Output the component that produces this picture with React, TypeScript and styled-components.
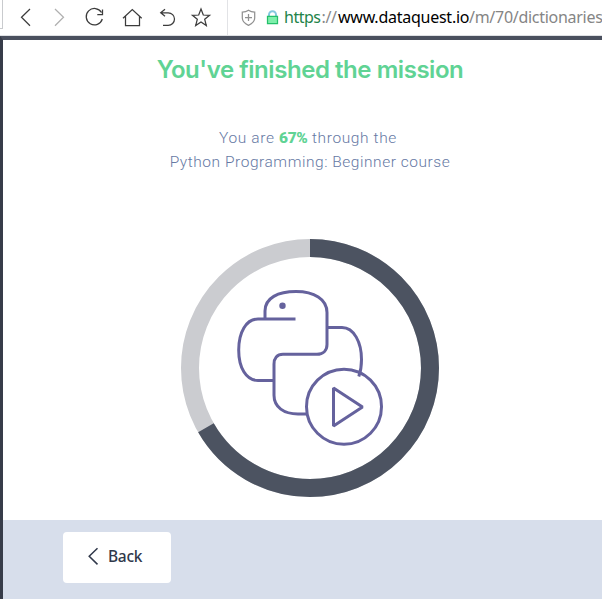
import React from 'react';
import styled, { createGlobalStyle } from 'styled-components';

const GlobalStyle = createGlobalStyle`
  * { box-sizing: border-box; }
  body { margin: 0; background: #fff; overflow: hidden; }
`;

const Window = styled.div`
  display: flex;
  flex-direction: column;
  width: 602px;
  height: 599px;
  overflow: hidden;
  background: #fff;
`;

const Toolbar = styled.header`
  display: flex;
  flex: none;
  height: 36px;
  border-bottom: 1px solid #dfe1e4;
`;

const TabEdge = styled.div`
  width: 3px;
  height: 29px;
  border-right: 1px solid #c9cbce;
  border-bottom: 1px solid #c9cbce;
`;

const NavIcons = styled.nav`
  display: flex;
  width: 225px;
  border-right: 1px solid #e2e3e6;
`;

const ToolIcon = styled.svg<{ $tone?: string }>`
  display: block;
  flex: none;
  fill: none;
  stroke: ${(p) => p.$tone ?? '#3c3c3c'};
  stroke-width: 1.25;
`;

const AddressBar = styled.div`
  display: flex;
  flex: 1;
  min-width: 0;
`;

const Url = styled.div`
  display: flex;
  font: 16px/35px 'Noto Sans', sans-serif;
  white-space: nowrap;
`;

const UrlPart = styled.span<{ $color: string; $width: number; $spacing: number }>`
  flex: none;
  width: ${(p) => p.$width}px;
  color: ${(p) => p.$color};
  letter-spacing: ${(p) => p.$spacing}px;
`;

const Page = styled.div`
  display: flex;
  flex-direction: column;
  flex: 1;
  border-top: 4px solid #4a505e;
  border-left: 3px solid #373c49;
`;

const Mission = styled.main`
  display: flex;
  flex: 1;
  flex-direction: column;
  align-items: center;
  padding-left: 15px;
`;

const Title = styled.h1`
  margin: 14px 0 0;
  color: #60d394;
  font: 600 24px/32px Inter, sans-serif;
  letter-spacing: -0.45px;
  white-space: nowrap;
`;

const Summary = styled.p`
  margin: 40px 0 0;
  color: #6679a4;
  font: 300 15.5px/24px Roboto, sans-serif;
  text-align: center;
  white-space: nowrap;
`;

const SummaryLine = styled.span<{ $shift?: number; $spacing: number }>`
  display: block;
  padding-right: ${(p) => p.$shift ?? 0}px;
  letter-spacing: ${(p) => p.$spacing}px;
`;

const Percent = styled.strong`
  color: #60d394;
  font-weight: 900;
  letter-spacing: -0.3px;
`;

const Progress = styled.svg`
  display: block;
  flex: none;
  width: 260px;
  height: 260px;
  margin-top: 64px;
  fill: none;
`;

const Footer = styled.footer`
  flex: none;
  height: 79px;
  padding: 12px 60px;
  background: #d7deeb;
`;

const BackButton = styled.button`
  display: flex;
  align-items: center;
  width: 108px;
  height: 51px;
  padding: 0 0 3px 24px;
  border: 0;
  border-radius: 4px;
  background: #fff;
  color: #30384a;
  font: 500 15.5px/20px 'Noto Sans', sans-serif;
  letter-spacing: -0.3px;
`;

const BackIcon = styled.svg`
  width: 21px;
  height: 20px;
  fill: none;
  stroke: #30384a;
  stroke-width: 1.5;
`;

export default function App() {
  return (
    <Window>
      <GlobalStyle />
      <Toolbar>
        <TabEdge />
        <NavIcons>
          <ToolIcon width="38" height="35" viewBox="3 0 38 35"><path d="M30 9 21.5 17.3 30 25.7" /></ToolIcon>
          <ToolIcon width="37" height="35" viewBox="41 0 37 35" $tone="#b0b0b0"><path d="M55 9 63.5 17.3 55 25.7" /></ToolIcon>
          <ToolIcon width="36" height="35" viewBox="78 0 36 35"><path d="M101.5 12.5A8.2 8.2 0 1 0 102.3 19M102.5 9.5v5.1h-5.2" /></ToolIcon>
          <ToolIcon width="36" height="35" viewBox="114 0 36 35"><path d="m123 18.2 9.3-8.7 9.4 8.7M125.5 16v9.5h14V16" /></ToolIcon>
          <ToolIcon width="33" height="35" viewBox="150 0 33 35"><path d="M165 9.3 160.7 12.8 165 16.3M161 12.8h7.2a6.3 6.3 0 0 1 0 12.6H163" /></ToolIcon>
          <ToolIcon width="36" height="35" viewBox="183 0 36 35"><path d="m201 9 2.3 6 6.3.3-4.9 4 1.6 6.2-5.3-3.5-5.3 3.5 1.6-6.2-4.9-4 6.3-.3Z" /></ToolIcon>
        </NavIcons>
        <AddressBar>
          <ToolIcon width="34" height="35" viewBox="228 0 34 35" $tone="#919191">
            <path d="M248.5 10.3c-2 1.4-4 1.8-6.2 1.8v6c0 3.8 2.8 5.8 6.2 7.3 3.4-1.5 6.2-3.5 6.2-7.3v-6c-2.2 0-4.2-.4-6.2-1.8ZM248.5 14v7M245 17.5h7" />
          </ToolIcon>
          <ToolIcon width="22" height="35" viewBox="262 0 22 35">
            <path stroke="#84c8df" strokeWidth="2" d="M269 16v-1.3a3.5 3.5 0 0 1 7 0V16" />
            <path fill="#7eefab" stroke="#24c06b" d="M267.5 16.3h10v7.2h-10z" />
          </ToolIcon>
          <Url>
            <UrlPart $color="#23834a" $width={37.5} $spacing={-0.5}>https</UrlPart>
            <UrlPart $color="#888" $width={16.5} $spacing={-0.4}>://</UrlPart>
            <UrlPart $color="#000" $width={131} $spacing={-0.25}>www.dataquest.io</UrlPart>
            <UrlPart $color="#858585" $width={133} $spacing={-0.28}>/m/70/dictionaries</UrlPart>
          </Url>
        </AddressBar>
      </Toolbar>
      <Page>
        <Mission>
          <Title>You've finished the mission</Title>
          <Summary>
            <SummaryLine $shift={4} $spacing={0.62}>You are <Percent>67%</Percent> through the</SummaryLine>
            <SummaryLine $spacing={0.54}>Python Programming: Beginner course</SummaryLine>
          </Summary>
          <Progress viewBox="180 238 260 260">
            <circle cx="310" cy="368" r="120" stroke="#cbccd0" strokeWidth="18" />
            <circle cx="310" cy="368" r="120" pathLength="100" stroke="#4c5361" strokeWidth="18" strokeDasharray="66.7 100" transform="rotate(-90 310 368)" />
            <g stroke="#65629d" strokeWidth="3">
              <path d="M265 319v-8c0-13 13-19.5 31-19.5s31 7.5 31 21v32c0 6-4 9.8-10 9.8h-34c-6 0-9 4-9 10v31c0 12 10 18.7 24 18.7h9" />
              <path d="M295.5 319H258c-12 0-19.3 13.5-19.3 31s7.3 30.5 19.3 30.5h16M327 327.5h15c12 0 19.5 15 19.5 32 0 6-.5 11-2.7 17" />
              <circle cx="344" cy="406.7" r="37.5" />
              <path d="M333.5 388v38l29-19Z" strokeLinejoin="bevel" />
            </g>
            <circle cx="282.5" cy="305.8" r="3.2" fill="#65629d" />
          </Progress>
        </Mission>
        <Footer>
          <BackButton>
            <BackIcon viewBox="87 546 21 20"><path d="M97.5 548.2 89.2 556.3 97.5 564.4" /></BackIcon>
            Back
          </BackButton>
        </Footer>
      </Page>
    </Window>
  );
}
